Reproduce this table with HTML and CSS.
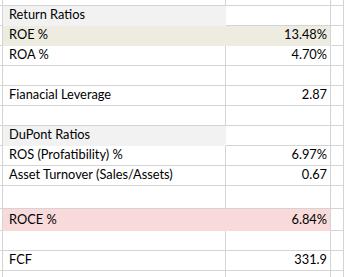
FILE: index.html
```html
<!DOCTYPE html>
<html>
<head>
<meta charset="utf-8">
<link rel="stylesheet" href="styles.css">
</head>
<body>
<div class="sheet">
  <div class="row top"><div class="c c0"></div><div class="c ca"></div><div class="c cb"></div><div class="c cc"></div></div>
  <div class="row head"><div class="c c0"></div><div class="c ca">Return Ratios</div><div class="c cb"></div><div class="c cc"></div></div>
  <div class="row beige"><div class="c c0"></div><div class="c ca">ROE %</div><div class="c cb">13.48%</div><div class="c cc"></div></div>
  <div class="row"><div class="c c0"></div><div class="c ca">ROA %</div><div class="c cb">4.70%</div><div class="c cc"></div></div>
  <div class="row"><div class="c c0"></div><div class="c ca"></div><div class="c cb"></div><div class="c cc"></div></div>
  <div class="row"><div class="c c0"></div><div class="c ca">Fianacial Leverage</div><div class="c cb">2.87</div><div class="c cc"></div></div>
  <div class="row"><div class="c c0"></div><div class="c ca"></div><div class="c cb"></div><div class="c cc"></div></div>
  <div class="row head"><div class="c c0"></div><div class="c ca">DuPont Ratios</div><div class="c cb"></div><div class="c cc"></div></div>
  <div class="row"><div class="c c0"></div><div class="c ca">ROS (Profatibility) %</div><div class="c cb">6.97%</div><div class="c cc"></div></div>
  <div class="row"><div class="c c0"></div><div class="c ca">Asset Turnover (Sales/Assets)</div><div class="c cb">0.67</div><div class="c cc"></div></div>
  <div class="row tall"><div class="c c0"></div><div class="c ca"></div><div class="c cb"></div><div class="c cc"></div></div>
  <div class="row pink"><div class="c c0"></div><div class="c ca">ROCE %</div><div class="c cb">6.84%</div><div class="c cc"></div></div>
  <div class="row"><div class="c c0"></div><div class="c ca"></div><div class="c cb"></div><div class="c cc"></div></div>
  <div class="row"><div class="c c0"></div><div class="c ca">FCF</div><div class="c cb">331.9</div><div class="c cc"></div></div>
  <div class="row"><div class="c c0"></div><div class="c ca"></div><div class="c cb"></div><div class="c cc"></div></div>
</div>
</body>
</html>
```
FILE: styles.css
```css
html, body {
  margin: 0;
  padding: 0;
  background: #ffffff;
}
.sheet {
  width: 344px;
  height: 277px;
  overflow: hidden;
  font-family: Lato, "Liberation Sans", sans-serif;
  font-size: 12.8px;
  color: #000000;
}
.row {
  display: flex;
  height: 20px;
}
.row.top { height: 6px; }
.row.tall { height: 23px; }
.row.pink { height: 22px; }
.c {
  box-sizing: border-box;
  height: 100%;
  border-right: 1px solid #d4d4d4;
  border-bottom: 1px solid #d4d4d4;
  white-space: nowrap;
  display: flex;
  align-items: flex-end;
  padding-bottom: 3px;
  line-height: 16px;
}
.c0 { width: 3px; flex: none; }
.ca { width: 223px; flex: none; padding-left: 6px; }
.cb {
  width: 105px;
  flex: none;
  justify-content: flex-end;
  padding-right: 3px;
}
.cc { flex: 1; }
.head .ca { background: #f2f2f2; border-color: #f2f2f2; }
.beige .ca, .beige .cb { background: #eeece1; border-bottom-color: #eeece1; }
.beige .ca { border-right-color: #eeece1; }
.pink .ca, .pink .cb { background: #f8dadb; border-bottom-color: #f8dadb; }
.pink .ca { border-right-color: #f8dadb; }
```
